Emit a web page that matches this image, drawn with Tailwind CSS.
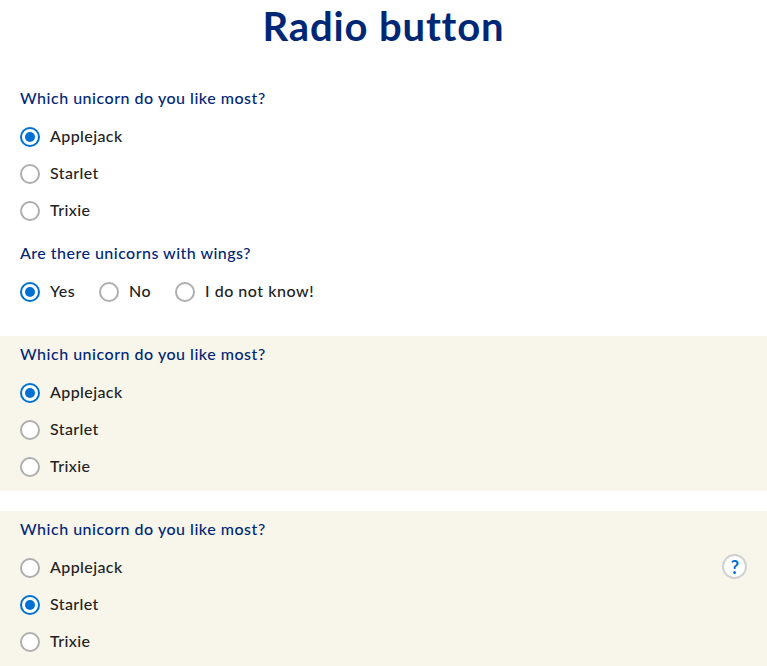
<!DOCTYPE html>
<html lang="en">
<head>
<meta charset="utf-8">
<title>Radio button</title>
<script src="https://cdn.jsdelivr.net/npm/@tailwindcss/browser@4"></script>
</head>
<body class="bg-white font-['Lato','Noto_Sans',sans-serif] font-medium text-base text-[#222] overflow-hidden">
<h1 class="h-20 pt-[2px] text-center text-[40px] leading-12 font-bold tracking-[0.85px] text-[#002776]">Radio button</h1>

<section class="h-[155px] px-5 pt-[6px]">
  <h2 class="leading-6 tracking-[0.52px] text-[#002776]">Which unicorn do you like most?</h2>
  <div class="mt-[17px] flex flex-col gap-[17px] tracking-[0.4px]">
    <label class="flex h-5 items-center gap-2.5"><span class="flex size-5 items-center justify-center rounded-full border-2 border-[#0070d2] bg-white"><i class="size-2.5 rounded-full bg-[#0070d2]"></i></span><span class="pb-0.5">Applejack</span></label>
    <label class="flex h-5 items-center gap-2.5"><span class="size-5 rounded-full border-2 border-[#aeaeae] bg-white"></span><span class="pb-0.5">Starlet</span></label>
    <label class="flex h-5 items-center gap-2.5"><span class="size-5 rounded-full border-2 border-[#aeaeae] bg-white"></span><span class="pb-0.5">Trixie</span></label>
  </div>
</section>

<section class="h-[101px] px-5 pt-[6px]">
  <h2 class="leading-6 tracking-[0.47px] text-[#002776]">Are there unicorns with wings?</h2>
  <div class="mt-[17px] flex tracking-[0.5px]">
    <label class="flex h-5 w-[79px] items-center gap-2.5"><span class="flex size-5 items-center justify-center rounded-full border-2 border-[#0070d2] bg-white"><i class="size-2.5 rounded-full bg-[#0070d2]"></i></span><span class="pb-0.5">Yes</span></label>
    <label class="flex h-5 w-[76px] items-center gap-2.5"><span class="size-5 rounded-full border-2 border-[#aeaeae] bg-white"></span><span class="pb-0.5">No</span></label>
    <label class="flex h-5 items-center gap-2.5 tracking-[0.53px]"><span class="size-5 rounded-full border-2 border-[#aeaeae] bg-white"></span><span class="pb-0.5">I do not know!</span></label>
  </div>
</section>

<section class="mb-5 h-[155px] bg-[#f8f5ea] px-5 pt-[6px]">
  <h2 class="leading-6 tracking-[0.52px] text-[#002776]">Which unicorn do you like most?</h2>
  <div class="mt-[17px] flex flex-col gap-[17px] tracking-[0.4px]">
    <label class="flex h-5 items-center gap-2.5"><span class="flex size-5 items-center justify-center rounded-full border-2 border-[#0070d2] bg-white"><i class="size-2.5 rounded-full bg-[#0070d2]"></i></span><span class="pb-0.5">Applejack</span></label>
    <label class="flex h-5 items-center gap-2.5"><span class="size-5 rounded-full border-2 border-[#aeaeae] bg-white"></span><span class="pb-0.5">Starlet</span></label>
    <label class="flex h-5 items-center gap-2.5"><span class="size-5 rounded-full border-2 border-[#aeaeae] bg-white"></span><span class="pb-0.5">Trixie</span></label>
  </div>
</section>

<section class="h-[155px] bg-[#f8f5ea] px-5 pt-[6px]">
  <h2 class="leading-6 tracking-[0.52px] text-[#002776]">Which unicorn do you like most?</h2>
  <div class="flex items-start justify-between">
    <div class="mt-[17px] flex flex-col gap-[17px] tracking-[0.4px]">
      <label class="flex h-5 items-center gap-2.5"><span class="size-5 rounded-full border-2 border-[#aeaeae] bg-white"></span><span class="pb-0.5">Applejack</span></label>
      <label class="flex h-5 items-center gap-2.5"><span class="flex size-5 items-center justify-center rounded-full border-2 border-[#0070d2] bg-white"><i class="size-2.5 rounded-full bg-[#0070d2]"></i></span><span class="pb-0.5">Starlet</span></label>
      <label class="flex h-5 items-center gap-2.5"><span class="size-5 rounded-full border-2 border-[#aeaeae] bg-white"></span><span class="pb-0.5">Trixie</span></label>
    </div>
    <button class="mt-[13px] flex size-[25px] items-center justify-center rounded-full border-2 border-[#d0d0d0] bg-white pl-px pt-px text-[18px] font-bold leading-5 text-[#0070d2]">?</button>
  </div>
</section>
</body>
</html>
